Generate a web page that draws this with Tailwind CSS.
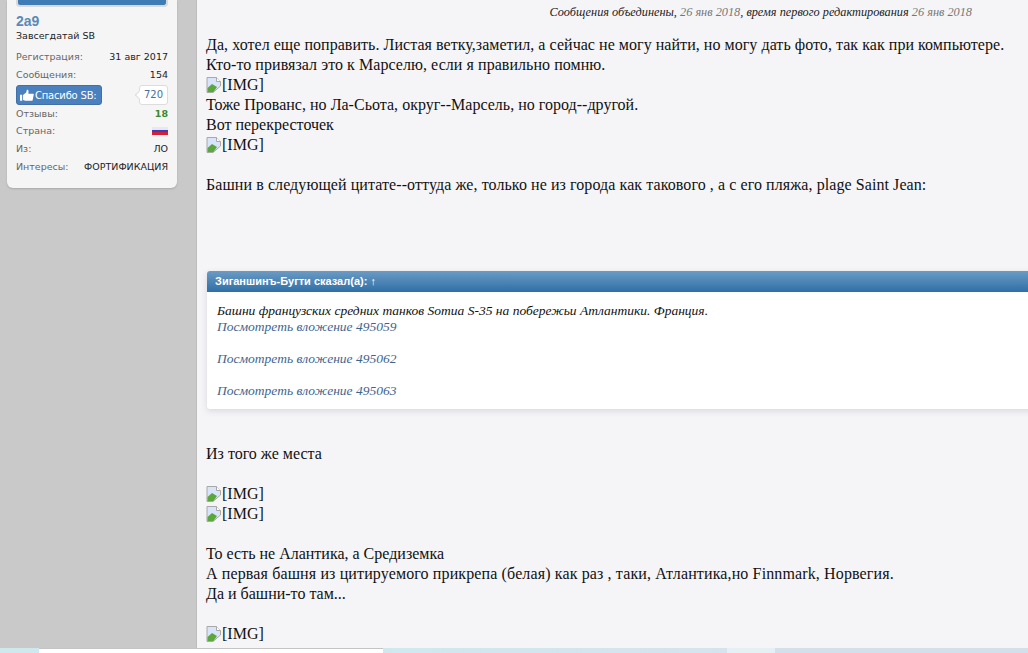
<!DOCTYPE html>
<html lang="ru"><head><meta charset="utf-8">
<script src="https://cdn.jsdelivr.net/npm/@tailwindcss/browser@4"></script>
<title>Post</title></head>
<body class="m-0 w-[1028px] h-[653px] overflow-hidden bg-[#f5f5f8]">
<div class="flex h-[648px] overflow-hidden">
  <aside class="w-[197px] shrink-0 bg-[#c9c9c9] border-r border-[#bdbdbd] pl-[7px] pr-[19px]">
    <div class="bg-[#f5f5f6] rounded-b-md shadow-[0_1px_2px_#a8a8a8] h-[188px] px-[9px] font-['DejaVu_Sans',sans-serif] text-[9.500px] text-[#222]">
      <div class="h-[7px] bg-[#3f7cb5] border-2 border-t-0 border-[#d9d9d9] rounded-b-sm"></div>
      <div class="mt-[4px] text-[14px] leading-[20px] font-bold text-[#5a8ab5] font-['Liberation_Sans',sans-serif]">2a9</div>
      <div class="leading-[16px] -mt-[3px]">Завсегдатай SB</div>
      <div class="mt-[4px] flex justify-between leading-[18px]"><span class="text-[#666]">Регистрация:</span><span>31 авг 2017</span></div>
      <div class="flex justify-between leading-[18px]"><span class="text-[#666]">Сообщения:</span><span>154</span></div>
      <div class="mt-[1px] flex justify-between items-center h-[20px] relative">
        <div class="w-[86px] h-[20px] bg-[#4a80bd] rounded-[3px] border border-[#3f70a8] text-white text-[10px] tracking-[-0.2px] flex items-center pl-[3px] gap-[1px]">
          <svg viewBox="0 0 16 14" class="w-[14px] h-[13px] shrink-0" fill="#fff"><path d="M0 6h2.500v7H0zM3.500 6.500l3.500-3 1-3.500c2 0 2 2.500 1.500 5H15c1 0 1 1.500.5 2l-1 5c-.2.800-.8 1-1.500 1H6l-2.500-1z"/></svg>
          <span class="whitespace-nowrap">Спасибо SB:</span>
        </div>
        <div class="relative w-[29px] h-[20px] bg-white border border-[#ddd] rounded-[3px] text-[#4a6f9a] text-center text-[10px] leading-[18px]">720<span class="absolute -left-[4px] top-[6px] w-[6px] h-[6px] bg-white border-l border-b border-[#ddd] rotate-45"></span></div>
      </div>
      <div class="flex justify-between leading-[18px]"><span class="text-[#666]">Отзывы:</span><span class="font-bold text-[#3a8a2a]">18</span></div>
      <div class="-mt-[1px] flex justify-between items-center leading-[18px]"><span class="text-[#666]">Страна:</span>
        <span class="w-[16px] h-[8px] flex flex-col"><i class="flex-1 bg-[#e8e8f0]"></i><i class="flex-1 bg-[#3c3cc0]"></i><i class="flex-1 bg-[#d42030]"></i></span></div>
      <div class="flex justify-between leading-[18px]"><span class="text-[#666]">Из:</span><span>ЛО</span></div>
      <div class="flex justify-between leading-[18px]"><span class="text-[#666]">Интересы:</span><span>ФОРТИФИКАЦИЯ</span></div>
    </div>
  </aside>
  <main class="flex-1 min-w-0 pl-[9px] font-['Liberation_Serif',serif] text-[16px] leading-[20px] text-[#111] overflow-hidden">
    <div class="h-[35px] pt-[4px] pr-[56px] text-right text-[12.300px] leading-[16px] italic text-[#222] whitespace-nowrap">Сообщения объединены, <span class="text-[#777]">26 янв 2018</span>, время первого редактирования <span class="text-[#777]">26 янв 2018</span></div>
    <div class="whitespace-nowrap tracking-[0.044px]">Да, хотел еще поправить. Листая ветку,заметил, а сейчас не могу найти, но могу дать фото, так как при компьютере.</div>
    <div class="tracking-[0.055px]">Кто-то привязал это к Марселю, если я правильно помню.</div>
    <div class="flex items-center h-[20px]"><svg viewBox="0 0 16 16" class="w-[16px] h-[16px]"><path d="M1 .5h9.500l4 4v4.500L7 15.500H1z" fill="#d8e4fa" stroke="#a8a8a8"/><path d="M10.500.5v4h4" fill="#fff" stroke="#a8a8a8"/><path d="M1.500 15v-4L6 7l5 3-3.500 5z" fill="#5aa83c"/></svg>[IMG]</div>
    <div class="tracking-[0.017px]">Тоже Прованс, но Ла-Сьота, округ--Марсель, но город--другой.</div>
    <div>Вот перекресточек</div>
    <div class="flex items-center h-[20px]"><svg viewBox="0 0 16 16" class="w-[16px] h-[16px]"><path d="M1 .5h9.500l4 4v4.500L7 15.500H1z" fill="#d8e4fa" stroke="#a8a8a8"/><path d="M10.500.5v4h4" fill="#fff" stroke="#a8a8a8"/><path d="M1.500 15v-4L6 7l5 3-3.500 5z" fill="#5aa83c"/></svg>[IMG]</div>
    <div class="mt-[20px] tracking-[0.077px]">Башни в следующей цитате--оттуда же, только не из города как такового , а с его пляжа, plage Saint Jean:</div>
    <div class="mt-[76px] ml-[1px] w-[850px] rounded-[3px] bg-white shadow-[0_2px_6px_#d8d8dc] h-[138px]">
      <div class="h-[21px] rounded-t-[3px] bg-gradient-to-b from-[#6a9bc4] to-[#2f6fa6] pl-[8px] font-['Liberation_Sans',sans-serif] font-bold text-[11px] leading-[21px] text-white">Зиганшинъ-Бугти сказал(а): ↑</div>
      <div class="pt-[11px] px-[10px] italic text-[13.500px] leading-[16px]">
        <div>Башни французских средних танков Somua S-35 на побережьи Атлантики. Франция.</div>
        <div class="text-[#3f658f]">Посмотреть вложение 495059</div>
        <div class="mt-[16px] text-[#3f658f]">Посмотреть вложение 495062</div>
        <div class="mt-[16px] text-[#3f658f]">Посмотреть вложение 495063</div>
      </div>
    </div>
    <div class="mt-[35px]">Из того же места</div>
    <div class="mt-[20px] flex items-center h-[20px]"><svg viewBox="0 0 16 16" class="w-[16px] h-[16px]"><path d="M1 .5h9.500l4 4v4.500L7 15.500H1z" fill="#d8e4fa" stroke="#a8a8a8"/><path d="M10.500.5v4h4" fill="#fff" stroke="#a8a8a8"/><path d="M1.500 15v-4L6 7l5 3-3.500 5z" fill="#5aa83c"/></svg>[IMG]</div>
    <div class="flex items-center h-[20px]"><svg viewBox="0 0 16 16" class="w-[16px] h-[16px]"><path d="M1 .5h9.500l4 4v4.500L7 15.500H1z" fill="#d8e4fa" stroke="#a8a8a8"/><path d="M10.500.5v4h4" fill="#fff" stroke="#a8a8a8"/><path d="M1.500 15v-4L6 7l5 3-3.500 5z" fill="#5aa83c"/></svg>[IMG]</div>
    <div class="mt-[20px]">То есть не Алантика, а Средиземка</div>
    <div class="tracking-[0.126px]">А первая башня из цитируемого прикрепа (белая) как раз , таки, Атлантика,но Finnmark, Норвегия.</div>
    <div>Да и башни-то там...</div>
    <div class="mt-[20px] flex items-center h-[20px]"><svg viewBox="0 0 16 16" class="w-[16px] h-[16px]"><path d="M1 .5h9.500l4 4v4.500L7 15.500H1z" fill="#d8e4fa" stroke="#a8a8a8"/><path d="M10.500.5v4h4" fill="#fff" stroke="#a8a8a8"/><path d="M1.500 15v-4L6 7l5 3-3.500 5z" fill="#5aa83c"/></svg>[IMG]</div>
  </main>
</div>
<div class="flex h-[5px]">
  <div class="w-[39px] bg-[#cfe8ee]"></div>
  <div class="w-[344px] bg-white border-t border-[#c4c4c4]"></div>
  <div class="w-[344px] bg-gradient-to-r from-[#cfe8ee] to-[#d5e3ee]"></div>
  <div class="w-[48px] bg-[#e4f0f4]"></div>
  <div class="flex-1 bg-[#d3e0ec]"></div>
</div>
</body></html>
